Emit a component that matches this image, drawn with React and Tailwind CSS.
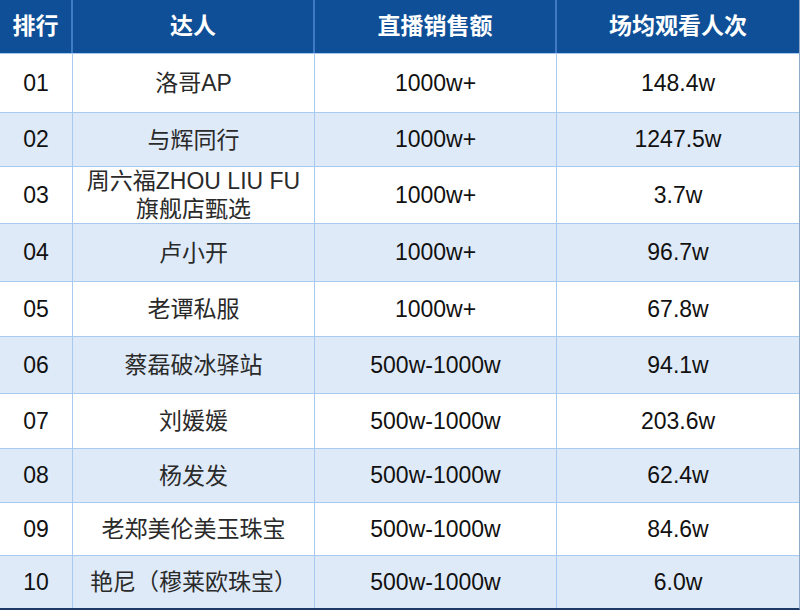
import React from "react";

const rows = [
  { rank: "01", name: "洛哥AP", sales: "1000w+", views: "148.4w", h: "h-[59px]" },
  { rank: "02", name: "与辉同行", sales: "1000w+", views: "1247.5w", h: "h-[54px]" },
  { rank: "03", name: ["周六福ZHOU LIU FU", "旗舰店甄选"], sales: "1000w+", views: "3.7w", h: "h-[57px]" },
  { rank: "04", name: "卢小开", sales: "1000w+", views: "96.7w", h: "h-[58px]" },
  { rank: "05", name: "老谭私服", sales: "1000w+", views: "67.8w", h: "h-[55px]" },
  { rank: "06", name: "蔡磊破冰驿站", sales: "500w-1000w", views: "94.1w", h: "h-[57px]" },
  { rank: "07", name: "刘媛媛", sales: "500w-1000w", views: "203.6w", h: "h-[55px]" },
  { rank: "08", name: "杨发发", sales: "500w-1000w", views: "62.4w", h: "h-[54px]" },
  { rank: "09", name: "老郑美伦美玉珠宝", sales: "500w-1000w", views: "84.6w", h: "h-[53px]" },
  { rank: "10", name: "艳尼（穆莱欧珠宝）", sales: "500w-1000w", views: "6.0w", h: "h-[53px]" },
];

const cols = "grid grid-cols-[73px_242px_242px_242px]";

const App = () => {
  return (
    <div
      className="w-[800px] h-[610px] bg-white overflow-hidden"
      style={{ fontFamily: '"Liberation Sans", "Noto Sans CJK SC", sans-serif' }}
    >
      <div className="w-[800px] border-r border-r-[#8fa9c9] border-b-2 border-b-[#1d3a66]">
        {/* header */}
        <div className={`${cols} h-[53px] bg-[#0e4f97] text-white text-[23px] font-bold`}>
          <div className="flex items-center justify-center border-r-2 border-[#3f7bc4]">排行</div>
          <div className="flex items-center justify-center border-r-2 border-[#3f7bc4]">达人</div>
          <div className="flex items-center justify-center border-r-2 border-[#3f7bc4]">直播销售额</div>
          <div className="flex items-center justify-center">场均观看人次</div>
        </div>

        {rows.map((row, i) => (
          <div
            key={row.rank}
            className={`${cols} ${row.h} text-[23px] text-[#111] border-t border-[#a9caf0] ${
              i % 2 === 1 ? "bg-[#dfeaf8]" : "bg-white"
            }`}
          >
            <div className="flex items-center justify-center border-r border-[#a9caf0]">{row.rank}</div>
            <div className="flex flex-col items-center justify-center border-r border-[#a9caf0] text-[#2a2a2a] leading-[28px]">
              {Array.isArray(row.name) ? (
                row.name.map((line) => <span key={line}>{line}</span>)
              ) : (
                <span>{row.name}</span>
              )}
            </div>
            <div className="flex items-center justify-center border-r border-[#a9caf0]">{row.sales}</div>
            <div className="flex items-center justify-center">{row.views}</div>
          </div>
        ))}
      </div>
    </div>
  );
};

export default App;
